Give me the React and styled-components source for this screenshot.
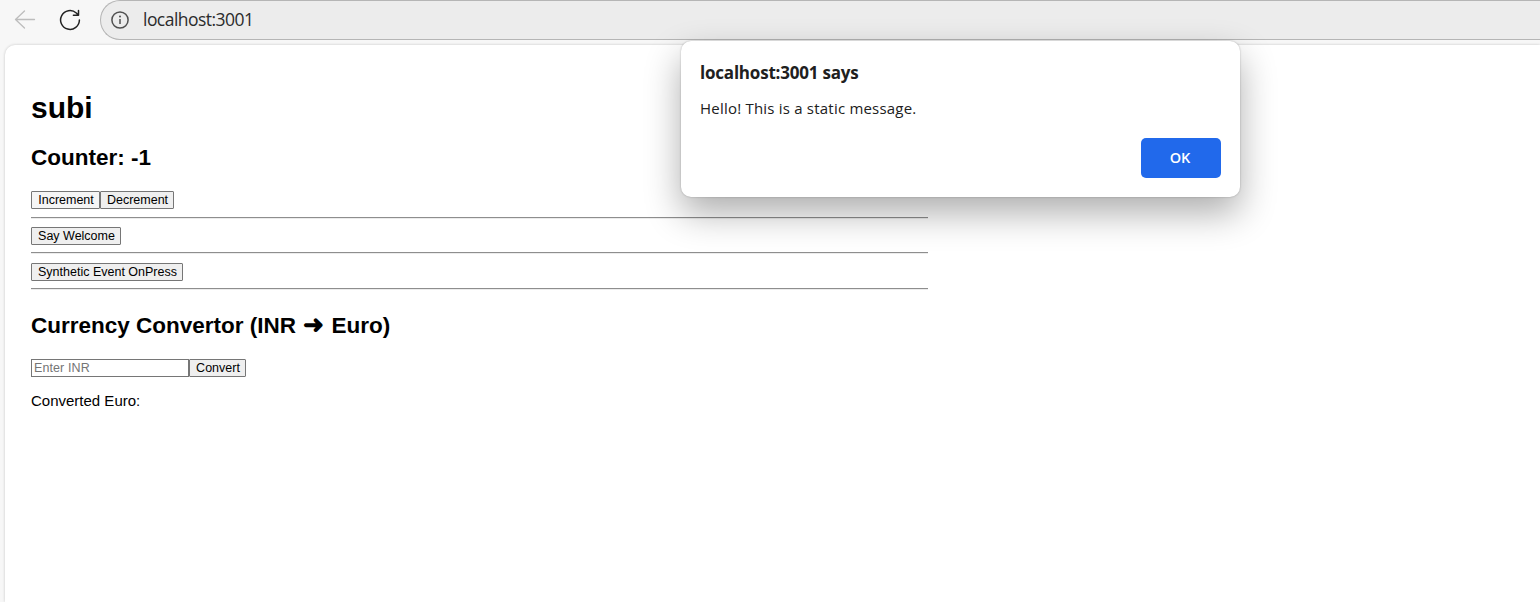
import React, { useState } from "react";
import styled, { createGlobalStyle } from "styled-components";

const GlobalStyle = createGlobalStyle`
  * { box-sizing: border-box; }
  html, body { margin: 0; height: 100%; overflow: hidden; background: #f7f7f7; }
`;

const uiFont = `"Segoe UI", "Open Sans", "Noto Sans", sans-serif`;

const Browser = styled.div`
  display: flex;
  flex-direction: column;
  width: 100%;
  height: 100vh;
  background: #f7f7f7;
  overflow: hidden;
`;

const Toolbar = styled.header`
  display: flex;
  align-items: center;
  flex: none;
  height: 40px;
  padding-left: 14px;
`;

const BackIcon = styled.svg`
  flex: none;
  width: 22px;
  height: 22px;
  margin-right: 23px;
`;

const ReloadIcon = styled.svg`
  flex: none;
  width: 22px;
  height: 22px;
  margin-right: 19px;
`;

const AddressBar = styled.div`
  display: flex;
  align-items: center;
  flex: 1;
  height: 40px;
  padding-left: 9px;
  background: #ececec;
  border: 1px solid #b5b5b5;
  border-right: 0;
  border-radius: 20px 0 0 20px;
`;

const InfoIcon = styled.svg`
  flex: none;
  width: 20px;
  height: 20px;
  margin-right: 13px;
`;

const Url = styled.span`
  padding-bottom: 2px;
  font: 400 17.5px/24px ${uiFont};
  letter-spacing: -0.54px;
  color: #2b2b2b;
`;

const Page = styled.main`
  flex: 1;
  margin: 5px 0 0 5px;
  padding: 46px 0 0 26px;
  background: #fff;
  border-radius: 10px 0 0 0;
  box-shadow: 0 0 3px rgba(0, 0, 0, 0.2);
  font: 15px/17px "Liberation Sans", Arial, sans-serif;
  color: #000;
`;

const Content = styled.div`
  width: 897px;
`;

const Title = styled.h1`
  margin: 0 0 20px;
  font-size: 30px;
  line-height: 34px;
`;

const Heading = styled.h2`
  margin: 0 0 20px;
  font-size: 22.5px;
  line-height: 26px;
`;

const Arrow = styled.span`
  display: inline-block;
  margin: 0 1px;
  font-size: 25px;
  line-height: 20px;
`;

const Row = styled.div`
  display: flex;
  height: 18px;
`;

const Button = styled.button`
  width: ${(p) => p.$width}px;
  height: 18px;
  padding: 0 0 1px 1px;
  border: 1px solid #767676;
  border-radius: 1px;
  background: ${(p) => (p.$hovered ? "#f5f5f5" : "#efefef")};
  color: #000;
  font: 12.5px/14px "Liberation Sans", Arial, sans-serif;
  white-space: nowrap;
`;

const Rule = styled.hr`
  height: 2px;
  margin: ${(p) => p.$margin || "8px 0"};
  border: 0;
  border-top: 1px solid #8e8e8e;
  border-bottom: 1px solid #ececec;
`;

const AmountInput = styled.input`
  width: 158px;
  height: 18px;
  padding: 0 2px 1px;
  border: 1px solid #767676;
  border-radius: 0;
  background: #fff;
  font: 12.5px/14px "Liberation Sans", Arial, sans-serif;
  &::placeholder { color: #757575; letter-spacing: 0.1px; }
`;

const Result = styled.p`
  margin: 15px 0 0;
`;

const Dialog = styled.section`
  position: absolute;
  top: 41px;
  left: 681px;
  display: flex;
  flex-direction: column;
  width: 559px;
  height: 156px;
  padding: 20px 19px 19px;
  border-radius: 10px;
  background: #fff;
  box-shadow: 0 0 2px rgba(0, 0, 0, 0.28), 0 16px 36px rgba(0, 0, 0, 0.32);
  font-family: ${uiFont};
  color: #202020;
`;

const DialogTitle = styled.div`
  font-size: 17px;
  font-weight: 700;
  line-height: 24px;
  letter-spacing: -0.21px;
`;

const DialogMessage = styled.div`
  margin-top: 13px;
  font-size: 15px;
  line-height: 20px;
  letter-spacing: 0.21px;
`;

const OkButton = styled.button`
  align-self: flex-end;
  flex: none;
  width: 80px;
  height: 40px;
  margin-top: auto;
  padding: 0 2px 0 0;
  border: 0;
  border-radius: 5px;
  background: #2169eb;
  color: #fff;
  font: 600 14.5px/20px ${uiFont};
`;

export default function App() {
  const [amount, setAmount] = useState("");
  return (
    <>
      <GlobalStyle />
      <Browser>
        <Toolbar>
          <BackIcon viewBox="0 0 22 22" fill="none" stroke="#bdbdbd" strokeWidth="1.3" strokeLinecap="round" strokeLinejoin="round">
            <path d="M10.5 2 1.5 10.5l9 8.5M1.5 10.5h19" />
          </BackIcon>
          <ReloadIcon viewBox="0 0 22 22" fill="none" stroke="#222" strokeWidth="1.5" strokeLinecap="round" strokeLinejoin="round">
            <path d="M20.4 11A9.4 9.4 0 1 1 17.3 4L19.3 6M19.5 1.5V6.3H14.4" />
          </ReloadIcon>
          <AddressBar>
            <InfoIcon viewBox="0 0 20 20" fill="none" stroke="#505050" strokeWidth="1.5">
              <circle cx="10" cy="10" r="8.1" />
              <path d="M10 9v5" />
              <circle cx="10" cy="6.5" r="1" fill="#505050" stroke="none" />
            </InfoIcon>
            <Url>localhost:3001</Url>
          </AddressBar>
        </Toolbar>
        <Page>
          <Content>
            <Title>subi</Title>
            <Heading>Counter: -1</Heading>
            <Row>
              <Button $width={69} $hovered>Increment</Button>
              <Button $width={74}>Decrement</Button>
            </Row>
            <Rule $margin="8px 0 8px" />
            <Row><Button $width={90}>Say Welcome</Button></Row>
            <Rule $margin="7px 0 9px" />
            <Row><Button $width={152}>Synthetic Event OnPress</Button></Row>
            <Rule $margin="7px 0 23px" />
            <Heading>Currency Convertor (INR <Arrow>➜</Arrow> Euro)</Heading>
            <Row>
              <AmountInput placeholder="Enter INR" value={amount} onChange={(e) => setAmount(e.target.value)} />
              <Button $width={57}>Convert</Button>
            </Row>
            <Result>Converted Euro:</Result>
          </Content>
        </Page>
      </Browser>
      <Dialog role="alertdialog">
        <DialogTitle>localhost:3001 says</DialogTitle>
        <DialogMessage>Hello! This is a static message.</DialogMessage>
        <OkButton>OK</OkButton>
      </Dialog>
    </>
  );
}
